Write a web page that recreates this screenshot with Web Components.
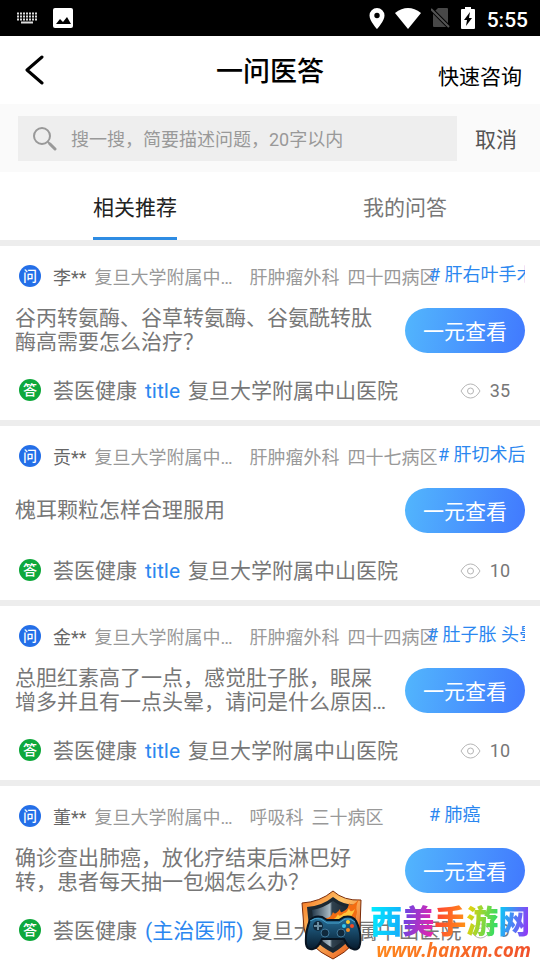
<!DOCTYPE html>
<html lang="zh-CN">
<head>
<meta charset="utf-8">
<meta name="viewport" content="width=device-width, initial-scale=1">
<title>一问医答</title>
<style>
    body {
        margin: 0;
        background: #fff;
        color: #777;
        font-family: Roboto, "Noto Sans CJK SC", sans-serif;
        font-size: 21px;
        line-height: 24px;
    }
</style>
</head>
<body>
<qa-app></qa-app>

<script>
// small helper, every element clones its own template
function makeTemplate(html) {
    var t = document.createElement("template");
    t.innerHTML = html;
    return t;
}

// ---------- status bar ----------
var template_status = makeTemplate(`
<style>
    :host {
        display: flex;
        align-items: center;
        justify-content: space-between;
        height: 36px;
        padding: 0 12px 0 17px;
        background: #000;
        color: #fff;
    }
    div { display: flex; align-items: center; }
    svg { display: block; }
    .left { gap: 16px; }
    .right { gap: 10px; }
    .time { font-size: 21px; font-weight: 500; margin-left: 2px; padding-top: 3px; }
</style>
<div class="left">
    <svg width="20" height="12" viewBox="0 0 20 12" stroke="#ddd" fill="none">
        <path d="M0 1.5h20M0 4.5h20M0 7.5h20" stroke-width="2" stroke-dasharray="2 1"/>
        <path d="M4 10.5h12" stroke-width="2"/>
    </svg>
    <svg width="20" height="20" viewBox="0 0 20 20">
        <rect width="20" height="20" rx="2" fill="#fff"/>
        <path d="M3 16l4-5 3 3 4-5 4 7z" fill="#000"/>
    </svg>
</div>
<div class="right">
    <svg width="16" height="21" viewBox="0 0 16 21">
        <path fill="#fff" fill-rule="evenodd" d="M8 0a7.5 7.5 0 0 0-7.5 7.5C.5 13 8 21 8 21s7.5-8 7.5-13.5A7.5 7.5 0 0 0 8 0zm0 4.800a2.700 2.700 0 1 1 0 5.400 2.700 2.700 0 0 1 0-5.400z"/>
    </svg>
    <svg width="26" height="21" viewBox="0 0 26 21"><path fill="#fff" d="M0 5Q13-5 26 5L13 21z"/></svg>
    <svg width="20" height="20" viewBox="0 0 20 20">
        <path fill="#484848" d="M7 0h9q1 0 1 1v17q0 1-1 1H3q-1 0-1-1V5z"/>
        <path d="M0 1l18 18" stroke="#000" stroke-width="4"/>
        <path d="M0 1l18 18" stroke="#555" stroke-width="2"/>
    </svg>
    <svg width="14" height="22" viewBox="0 0 14 22">
        <path fill="#fff" d="M4 0h6v2h3q1 0 1 1v18q0 1-1 1H1q-1 0-1-1V3q0-1 1-1h3z"/>
        <path fill="#000" d="M9 5l-6 8h3l-1 6 6-8H8z"/>
    </svg>
    <span class="time">5:55</span>
</div>
`);

class StatusBar extends HTMLElement {
    constructor() {
        super();
        this.attachShadow({ mode: "open" });
        this.shadowRoot.appendChild(template_status.content.cloneNode(true));
    }
}
customElements.define("status-bar", StatusBar);

// ---------- page header ----------
var template_header = makeTemplate(`
<style>
    :host {
        display: grid;
        grid-template-columns: 1fr auto 1fr;
        align-items: center;
        height: 68px;
        padding: 0 18px 0 24px;
        color: #000;
    }
    button {
        border: 0;
        padding: 0;
        background: none;
        color: inherit;
        font: inherit;
    }
    .back { justify-self: start; }
    .back svg { display: block; }
    h1 { margin: 0; font-size: 27px; line-height: 32px; font-weight: 500; padding: 4px 6px 0 0; }
    .action { justify-self: end; padding-top: 14px; }
</style>
<button class="back" aria-label="返回">
    <svg width="20" height="30" viewBox="0 0 20 30" fill="none" stroke="#000" stroke-width="3" stroke-linecap="round" stroke-linejoin="round">
        <path d="M18 2L3 15l15 13"/>
    </svg>
</button>
<h1><slot></slot></h1>
<button class="action"></button>
`);

class PageHeader extends HTMLElement {
    constructor() {
        super();
        this.attachShadow({ mode: "open" });
        this.shadowRoot.appendChild(template_header.content.cloneNode(true));
    }

    connectedCallback() {
        this.shadowRoot.querySelector(".action").textContent = this.getAttribute("action");
    }
}
customElements.define("page-header", PageHeader);

// ---------- search ----------
var template_search = makeTemplate(`
<style>
    :host {
        display: flex;
        align-items: center;
        gap: 18px;
        height: 68px;
        padding: 0 23px 0 18px;
        background: #fafafa;
    }
    label {
        flex: 1;
        display: flex;
        align-items: center;
        gap: 14px;
        height: 45px;
        padding: 0 14px;
        background: #eee;
    }
    svg { flex: none; }
    input {
        flex: 1;
        min-width: 0;
        padding: 3px 0 0;
        border: 0;
        outline: 0;
        background: none;
        font: inherit;
        font-size: 18px;
    }
    input::placeholder { color: #999; opacity: 1; }
    button {
        padding: 4px 0 0;
        border: 0;
        background: none;
        color: #555;
        font: inherit;
    }
</style>
<label>
    <svg width="25" height="25" viewBox="0 0 25 25" fill="none" stroke="#999">
        <circle cx="10" cy="10" r="8" stroke-width="2"/>
        <path d="M16 16l2 2" stroke-width="2"/>
        <path d="M18 18l5 5" stroke-width="3" stroke-linecap="round"/>
    </svg>
    <input type="text" aria-label="搜索" placeholder="搜一搜，简要描述问题，20字以内">
</label>
<button>取消</button>
`);

class SearchBar extends HTMLElement {
    constructor() {
        super();
        this.attachShadow({ mode: "open" });
        this.shadowRoot.appendChild(template_search.content.cloneNode(true));
    }
}
customElements.define("search-bar", SearchBar);

// ---------- tabs ----------
var template_tabs = makeTemplate(`
<style>
    :host { display: flex; height: 68px; }
    div { flex: 1; display: flex; justify-content: center; }
    button {
        padding: 6px 0 0;
        border: 0;
        border-bottom: 3px solid transparent;
        background: none;
        color: #777;
        font: inherit;
    }
    button[aria-selected="true"] { color: #222; border-color: #2e8ce3; }
</style>
<div><button role="tab" aria-selected="true">相关推荐</button></div>
<div><button role="tab" aria-selected="false">我的问答</button></div>
`);

class TabBar extends HTMLElement {
    constructor() {
        super();
        this.attachShadow({ mode: "open" });
        this.shadowRoot.appendChild(template_tabs.content.cloneNode(true));
    }

    connectedCallback() {
        var tabs = this.shadowRoot.querySelectorAll("button");
        tabs.forEach(tab => tab.addEventListener("click", () => {
            tabs.forEach(t => t.setAttribute("aria-selected", t === tab));
        }));
    }
}
customElements.define("tab-bar", TabBar);

// ---------- round 问 / 答 badge ----------
var template_badge = makeTemplate(`
<style>
    :host {
        flex: none;
        display: flex;
        align-items: center;
        justify-content: center;
        width: 22px;
        height: 22px;
        margin: 0 12px 0 4px;
        border-radius: 50%;
        background: #246fe8;
        color: #fff;
        font-size: 14px;
        line-height: 20px;
        font-weight: 500;
    }
    :host([kind="answer"]) { margin-bottom: 2px; background: #0fa83c; }
</style>
<slot></slot>
`);

class RoundBadge extends HTMLElement {
    constructor() {
        super();
        this.attachShadow({ mode: "open" });
        this.shadowRoot.appendChild(template_badge.content.cloneNode(true));
    }
}
customElements.define("round-badge", RoundBadge);

// ---------- question card ----------
var template_card = makeTemplate(`
<style>
    :host {
        display: block;
        padding: 0 15px;
        border-top: 6px solid #ededed;
    }
    .row { display: flex; align-items: center; white-space: nowrap; }
    .head { height: 60px; font-size: 18px; color: #999; }
    .who { flex: 1; min-width: 0; display: flex; gap: 8px; padding-top: 4px; }
    .name { color: #666; }
    .hospital { flex: none; width: 147px; overflow: hidden; text-overflow: ellipsis; }
    .tag {
        position: relative;
        flex: none;
        width: var(--tag-width, 96px);
        overflow: hidden;
        padding-bottom: 2px;
        color: #2b87f0;
        text-decoration: none;
    }
    .body { gap: 15px; min-height: 48px; white-space: normal; }
    .question {
        flex: 1;
        margin: 0;
        display: -webkit-box;
        -webkit-box-orient: vertical;
        -webkit-line-clamp: 2;
        overflow: hidden;
    }
    button {
        flex: none;
        width: 120px;
        height: 45px;
        padding: 3px 0 0;
        border: 0;
        border-radius: 23px;
        background: linear-gradient(100deg, #52b6fd, #4179fe);
        color: #fff;
        font: inherit;
    }
    .foot { height: 58px; padding-top: 8px; }
    .reply { flex: 1; min-width: 0; display: flex; gap: 8px; }
    .title { color: #2b87f0; }
    .views { display: flex; align-items: center; gap: 9px; padding-right: 15px; font-size: 18px; }
</style>
<div class="row head">
    <round-badge>问</round-badge>
    <div class="who">
        <span class="name"></span><span class="hospital"></span><span class="dept"></span><span class="ward"></span>
    </div>
    <a class="tag" href="#"></a>
</div>
<div class="row body">
    <p class="question"><slot></slot></p>
    <button>一元查看</button>
</div>
<div class="row foot">
    <round-badge kind="answer">答</round-badge>
    <div class="reply"><span>荟医健康</span><span class="title"></span><span>复旦大学附属中山医院</span></div>
    <div class="views">
        <svg width="21" height="16" viewBox="0 0 21 16" fill="none" stroke="#b5b5b5">
            <path d="M1 8Q5 1 10.500 1T20 8Q16 15 10.500 15T1 8z"/>
            <circle cx="10.500" cy="8" r="3"/>
        </svg>
        <span class="count"></span>
    </div>
</div>
`);

class QuestionCard extends HTMLElement {
    constructor() {
        super();
        this.attachShadow({ mode: "open" });
        this.shadowRoot.appendChild(template_card.content.cloneNode(true));
    }

    connectedCallback() {
        ["name", "hospital", "dept", "ward", "tag", "title", "count"].forEach(key => {
            this.shadowRoot.querySelector("." + key).textContent = this.getAttribute("data-" + key);
        });
    }
}
customElements.define("question-card", QuestionCard);

// ---------- site mark, floats over the last card ----------
var template_mark = makeTemplate(`
<style>
    :host {
        position: fixed;
        right: 9px;
        bottom: 0;
        display: flex;
        align-items: flex-end;
        gap: 7px;
        pointer-events: none;
    }
    svg { display: block; }
    .site { font-size: 32px; line-height: 36px; font-weight: 900; white-space: nowrap; }
    .site span, .url {
        background: linear-gradient(100deg, var(--from), var(--to));
        -webkit-background-clip: text;
        background-clip: text;
        color: transparent;
    }
    .url {
        --from: #ff8a1c;
        --to: #f0502c;
        padding-left: 6px;
        font: italic 700 19px/20px "Open Sans", sans-serif;
    }
</style>
<svg width="62" height="70" viewBox="0 0 62 70">
    <defs>
        <linearGradient id="rim" x1="0" y1="0" x2="1" y2="1">
            <stop offset="0" stop-color="#f46a16"/><stop offset=".4" stop-color="#ffc66b"/><stop offset="1" stop-color="#e4480c"/>
        </linearGradient>
        <linearGradient id="steel" x1="0" y1="0" x2="1" y2="0">
            <stop offset="0" stop-color="#23384a"/><stop offset=".45" stop-color="#a9bac4"/><stop offset=".5" stop-color="#30424f"/><stop offset="1" stop-color="#15202a"/>
        </linearGradient>
        <linearGradient id="pad" x1="0" y1="0" x2="0" y2="1">
            <stop offset="0" stop-color="#26709b"/><stop offset="1" stop-color="#071b2d"/>
        </linearGradient>
    </defs>
    <path d="M32 1q11 10 28 9l-1 28q-2 18-27 31Q5 56 3 38L1 13q18-1 31-12z" fill="url(#rim)" stroke="#7a2b09"/>
    <path d="M32 7q10 8 23 8l-1 22q-3 15-22 26Q10 52 8 37L6 17q15-1 26-10z" fill="#1b2832"/>
    <path d="M32 11q8 6 19 7l-1 18q-3 13-18 22-17-9-19-22l-2-16q12-2 21-9z" fill="url(#steel)"/>
    <path d="M25 28q5 0 7-6 2 4 7-3 0 5 4 2 5-3 5-8 3 5 10-4-4 8-2 13-1 7-5 12H23z" fill="#f36d12"/>
    <path d="M30 30q5-1 7-6 1 4 6-1 3 0 5-5 1 6 6 1-3 8-8 11z" fill="#ffc33b"/>
    <path d="M9 30q5-5 12-3l5 3h12l5-3q8-2 12 4 6 12 4 23-1 7-7 5-5-1-9-10H21q-4 9-9 10-6 1-7-5-1-12 4-24z" fill="url(#pad)" stroke="#071421" stroke-width="2"/>
    <path d="M9 31q5-4 11-2l6 4h12l6-4q6-1 10 3" fill="none" stroke="#4ba6cf"/>
    <circle cx="17" cy="36" r="5" fill="#10293c"/>
    <path d="M17 32v8M13 36h8" stroke="#6a8ca0" stroke-width="2"/>
    <circle cx="24" cy="43" r="4" fill="#10293c" stroke="#407799"/>
    <circle cx="40" cy="43" r="4" fill="#10293c" stroke="#407799"/>
    <circle cx="47" cy="32" r="2" fill="#ffc931"/><circle cx="51" cy="36" r="2" fill="#f44a24"/>
    <circle cx="47" cy="40" r="2" fill="#f58a21"/><circle cx="43" cy="36" r="2" fill="#35c7ef"/>
</svg>
<div>
    <div class="site"><span style="--from:#00f0ff;--to:#16a7fa">西</span><span style="--from:#5d48e8;--to:#f321a8">美</span><span style="--from:#ff3a35;--to:#ff9a14">手</span><span style="--from:#ffd000;--to:#17de72">游</span><span style="--from:#00d6f5;--to:#a126f5">网</span></div>
    <div class="url">www.hanxm.com</div>
</div>
`);

class SiteMark extends HTMLElement {
    constructor() {
        super();
        this.attachShadow({ mode: "open" });
        this.shadowRoot.appendChild(template_mark.content.cloneNode(true));
    }
}
customElements.define("site-mark", SiteMark);

// ---------- whole page ----------
var template_app = makeTemplate(`
<style>
    :host { display: block; }
</style>
<status-bar></status-bar>
<page-header action="快速咨询">一问医答</page-header>
<search-bar></search-bar>
<tab-bar></tab-bar>
<main>
    <question-card data-name="李**" data-hospital="复旦大学附属中山医院" data-dept="肝肿瘤外科" data-ward="四十四病区" data-tag="# 肝右叶手术" data-title="title" data-count="35">谷丙转氨酶、谷草转氨酶、谷氨酰转肽酶高需要怎么治疗？</question-card>
    <question-card style="--tag-width:87px" data-name="贡**" data-hospital="复旦大学附属中山医院" data-dept="肝肿瘤外科" data-ward="四十七病区" data-tag="# 肝切术后" data-title="title" data-count="10">槐耳颗粒怎样合理服用</question-card>
    <question-card style="--tag-width:98px" data-name="金**" data-hospital="复旦大学附属中山医院" data-dept="肝肿瘤外科" data-ward="四十四病区" data-tag="# 肚子胀 头晕" data-title="title" data-count="10">总胆红素高了一点，感觉肚子胀，眼屎增多并且有一点头晕，请问是什么原因引起的，需要怎么治疗</question-card>
    <question-card data-name="董**" data-hospital="复旦大学附属中山医院" data-dept="呼吸科" data-ward="三十病区" data-tag="# 肺癌" data-title="(主治医师)" data-count="9">确诊查出肺癌，放化疗结束后淋巴好转，患者每天抽一包烟怎么办？</question-card>
</main>
<site-mark></site-mark>
`);

class QaApp extends HTMLElement {
    constructor() {
        super();
        this.attachShadow({ mode: "open" });
        this.shadowRoot.appendChild(template_app.content.cloneNode(true));
    }
}
customElements.define("qa-app", QaApp);
</script>
</body>
</html>
